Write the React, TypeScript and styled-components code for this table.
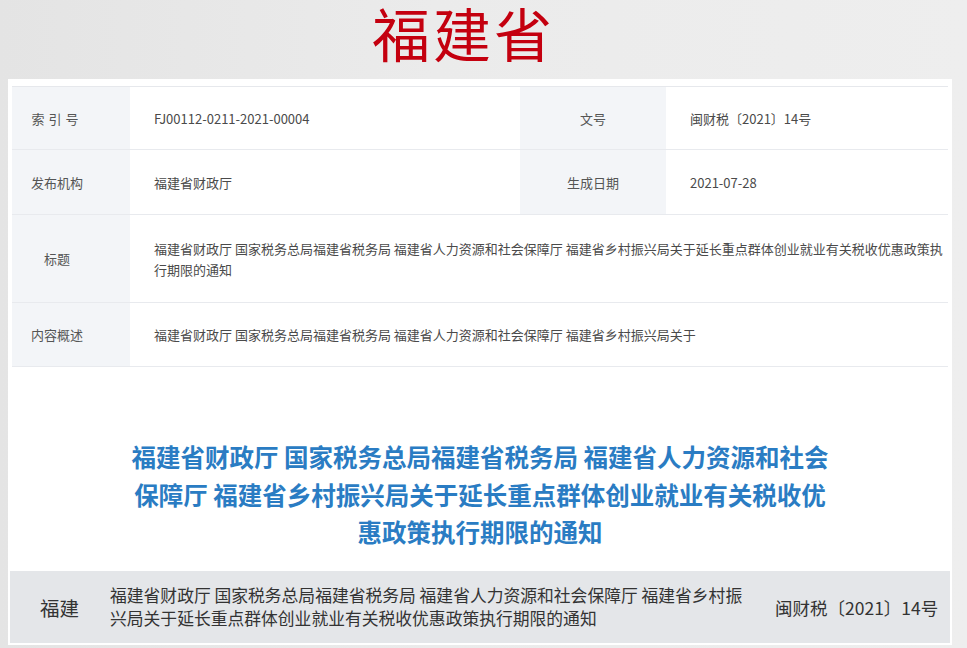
import styled, { createGlobalStyle } from "styled-components";

const GlobalStyle = createGlobalStyle`
    html, body {
        margin: 0;
        padding: 0;
    }
    body {
        width: 967px;
        height: 648px;
        overflow: hidden;
        background: linear-gradient(90deg, #e4e4e4 0%, #ebebeb 45%, #eeeeee 100%);
        font-family: "Noto Sans CJK SC", "Noto Sans", sans-serif;
    }
`;

const Page = styled.div`
    display: flex;
    flex-direction: column;
    height: 648px;
`;

const Header = styled.header`
    height: 79px;
    display: flex;
    justify-content: center;
    align-items: flex-start;
    padding: 0 40px 0 0;
    box-sizing: border-box;
`;

const Province = styled.h1`
    margin: 0;
    font-family: "Noto Sans CJK SC", sans-serif;
    font-weight: 400;
    font-size: 58px;
    line-height: 64px;
    color: #c4000f;
    letter-spacing: 3px;
`;

const Panel = styled.main`
    margin-left: 8px;
    width: 944px;
    background: #ffffff;
    padding: 7px 4px 2px 4px;
    box-sizing: border-box;
    display: flex;
    flex-direction: column;
`;

const InfoTable = styled.div`
    display: grid;
    grid-template-columns: 118px 390px 146px 1fr;
    border-top: 1px solid #e6e8ec;
`;

const Label = styled.div<{ $center?: boolean; $h: number }>`
    height: ${(p) => p.$h}px;
    background: #f3f5f8;
    border-bottom: 1px solid #e8eaee;
    display: flex;
    align-items: center;
    justify-content: center;
    padding-right: ${(p) => (p.$center ? 0 : 28)}px;
    box-sizing: border-box;
    font-size: 13px;
    color: #555;
`;

const Value = styled.div<{ $span?: boolean; $h: number }>`
    grid-column: ${(p) => (p.$span ? "span 3" : "auto")};
    height: ${(p) => p.$h}px;
    border-bottom: 1px solid #e8eaee;
    display: flex;
    align-items: center;
    padding-left: 24px;
    box-sizing: border-box;
    font-size: 13px;
    line-height: 21px;
    color: #4a4a4a;
    white-space: nowrap;
`;

const Spaced = styled.span`
    letter-spacing: 4px;
`;

const Headline = styled.section`
    height: 204px;
    padding-top: 71px;
    box-sizing: border-box;
    text-align: center;
`;

const HeadlineText = styled.h2`
    margin: 0;
    font-size: 24.5px;
    line-height: 37.5px;
    font-weight: 700;
    color: #2a7cc3;
`;

const Summary = styled.footer`
    margin: 0 -2px;
    height: 72px;
    background: #e4e6e9;
    display: flex;
    align-items: center;
`;

const SummaryTag = styled.div`
    width: 100px;
    padding-left: 30px;
    box-sizing: border-box;
    font-size: 19.5px;
    color: #333;
`;

const SummaryText = styled.div`
    width: 665px;
    font-size: 16.8px;
    line-height: 23px;
    color: #333;
    white-space: nowrap;
`;

const SummaryNo = styled.div`
    flex: 1;
    font-size: 17.5px;
    color: #333;
    white-space: nowrap;
`;

function App() {
    return (
        <Page>
            <GlobalStyle />
            <Header>
                <Province>福建省</Province>
            </Header>
            <Panel>
                <InfoTable>
                    <Label $h={63}><Spaced>索引号</Spaced></Label>
                    <Value $h={63}>FJ00112-0211-2021-00004</Value>
                    <Label $h={63} $center>文号</Label>
                    <Value $h={63}>闽财税〔2021〕14号</Value>

                    <Label $h={65}>发布机构</Label>
                    <Value $h={65}>福建省财政厅</Value>
                    <Label $h={65} $center>生成日期</Label>
                    <Value $h={65}>2021-07-28</Value>

                    <Label $h={88}>标题</Label>
                    <Value $h={88} $span>
                        <span>
                            福建省财政厅 国家税务总局福建省税务局 福建省人力资源和社会保障厅 福建省乡村振兴局关于延长重点群体创业就业有关税收优惠政策执
                            <br />
                            行期限的通知
                        </span>
                    </Value>

                    <Label $h={64}>内容概述</Label>
                    <Value $h={64} $span>
                        福建省财政厅 国家税务总局福建省税务局 福建省人力资源和社会保障厅 福建省乡村振兴局关于
                    </Value>
                </InfoTable>
                <Headline>
                    <HeadlineText>
                        福建省财政厅 国家税务总局福建省税务局 福建省人力资源和社会
                        <br />
                        保障厅 福建省乡村振兴局关于延长重点群体创业就业有关税收优
                        <br />
                        惠政策执行期限的通知
                    </HeadlineText>
                </Headline>
                <Summary>
                    <SummaryTag>福建</SummaryTag>
                    <SummaryText>
                        福建省财政厅 国家税务总局福建省税务局 福建省人力资源和社会保障厅 福建省乡村振
                        <br />
                        兴局关于延长重点群体创业就业有关税收优惠政策执行期限的通知
                    </SummaryText>
                    <SummaryNo>闽财税〔2021〕14号</SummaryNo>
                </Summary>
            </Panel>
        </Page>
    );
}

export default App;
